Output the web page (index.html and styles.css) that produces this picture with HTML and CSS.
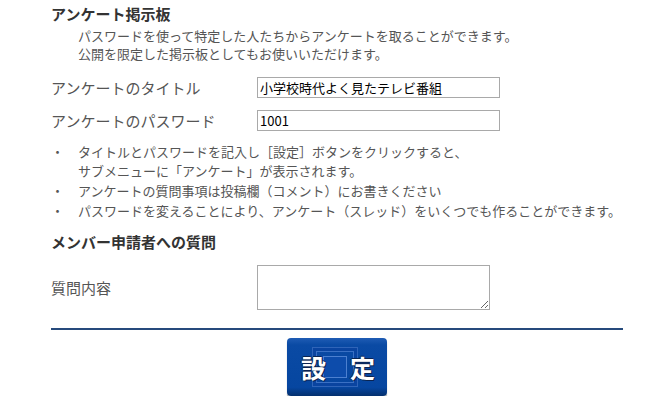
FILE: index.html
```html
<!DOCTYPE html>
<html lang="ja">
<head>
  <meta charset="UTF-8">
  <meta name="viewport" content="width=device-width, initial-scale=1.0">
  <title>アンケート掲示板</title>
  <link rel="stylesheet" href="styles.css">
</head>
<body>
  <div class="wrap">
    <h2 class="sec-title">アンケート掲示板</h2>
    <p class="desc">
      パスワードを使って特定した人たちからアンケートを取ることができます。<br>
      公開を限定した掲示板としてもお使いいただけます。
    </p>

    <div class="row first">
      <label class="label" for="enqTitle">アンケートのタイトル</label>
      <input class="field" id="enqTitle" type="text" value="小学校時代よく見たテレビ番組">
    </div>
    <div class="row">
      <label class="label" for="enqPass">アンケートのパスワード</label>
      <input class="field" id="enqPass" type="text" value="1001">
    </div>

    <ul class="notes">
      <li><span class="dot">・</span><span>タイトルとパスワードを記入し［設定］ボタンをクリックすると、<br>サブメニューに「アンケート」が表示されます。</span></li>
      <li><span class="dot">・</span><span>アンケートの質問事項は投稿欄（コメント）にお書きください</span></li>
      <li><span class="dot">・</span><span>パスワードを変えることにより、アンケート（スレッド）をいくつでも作ることができます。</span></li>
    </ul>

    <h2 class="sec-title sub">メンバー申請者への質問</h2>
    <div class="row ask">
      <label class="label" for="askText">質問内容</label>
      <textarea class="area" id="askText"></textarea>
    </div>

    <hr class="rule">

    <div class="actions">
      <button class="set-btn" type="button">
        <span class="deco"></span>
        <span class="ch">設</span>
        <span class="ch">定</span>
      </button>
    </div>
  </div>
</body>
</html>
```

FILE: styles.css
```css
body {
  margin: 0;
  background: #fff;
  font-family: "Noto Sans CJK JP", "Noto Sans", sans-serif;
  color: #555;
}

.wrap {
  width: 572px;
  padding-left: 51px;
}

.sec-title {
  margin: 4px 0 0;
  font-size: 15px;
  line-height: 20px;
  font-weight: bold;
  color: #333;
}

.sec-title.sub {
  margin-top: 12px;
}

.desc {
  margin: 3px 0 0;
  padding-left: 27px;
  font-size: 13px;
  line-height: 18px;
}

.row {
  display: flex;
  align-items: center;
  margin-top: 12px;
}

.row.first {
  margin-top: 14px;
}

.label {
  width: 206px;
  font-size: 15px;
  line-height: 21px;
}

.field {
  box-sizing: border-box;
  width: 243px;
  height: 21px;
  margin: 0;
  padding: 0 2px;
  border: 1px solid #a9a9a9;
  font-family: "Noto Sans CJK JP", sans-serif;
  font-size: 13px;
  color: #000;
}

.notes {
  list-style: none;
  margin: 11px 0 0;
  padding: 0;
  font-size: 13px;
  line-height: 19px;
}

.notes li {
  display: flex;
  margin-bottom: 1px;
}

.notes .dot {
  width: 27px;
  flex: none;
}

.row.ask {
  margin-top: 13px;
}

.area {
  box-sizing: border-box;
  width: 233px;
  height: 45px;
  margin: 0;
  border: 1px solid #a9a9a9;
}

.rule {
  margin: 18px 0 0;
  border: 0;
  height: 2px;
  background: #264a7c;
}

.actions {
  display: flex;
  justify-content: center;
  margin-top: 8px;
}

.set-btn {
  position: relative;
  display: flex;
  align-items: center;
  justify-content: space-between;
  width: 100px;
  height: 58px;
  padding: 0 12px 0 14px;
  border: 0;
  border-radius: 4px;
  background: linear-gradient(to bottom, #1f5cb4 0%, #0a4aa4 12%, #0646a0 85%, #04306e 100%);
  box-shadow: 0 2px 1px rgba(0, 0, 0, 0.35);
}

.set-btn .deco {
  position: absolute;
  left: 25px;
  top: 9px;
  width: 44px;
  height: 38px;
  border: 1px solid #2f64b8;
  box-shadow: inset 0 0 0 3px #0a44a0, inset 0 0 0 4px #3a70c4;
}

.set-btn .deco::after {
  content: "";
  position: absolute;
  left: 10px;
  top: 8px;
  width: 22px;
  height: 20px;
  border: 1px solid #4c80d0;
  background: #0d4cab;
}

.set-btn .ch {
  position: relative;
  font-family: "Noto Sans CJK JP", sans-serif;
  font-size: 25px;
  font-weight: bold;
  line-height: 30px;
  color: #fff;
  text-shadow: -1px 0 0 #0b2450, 1px 1px 0 #0b2450, 0 -1px 0 #0b2450;
}
```
